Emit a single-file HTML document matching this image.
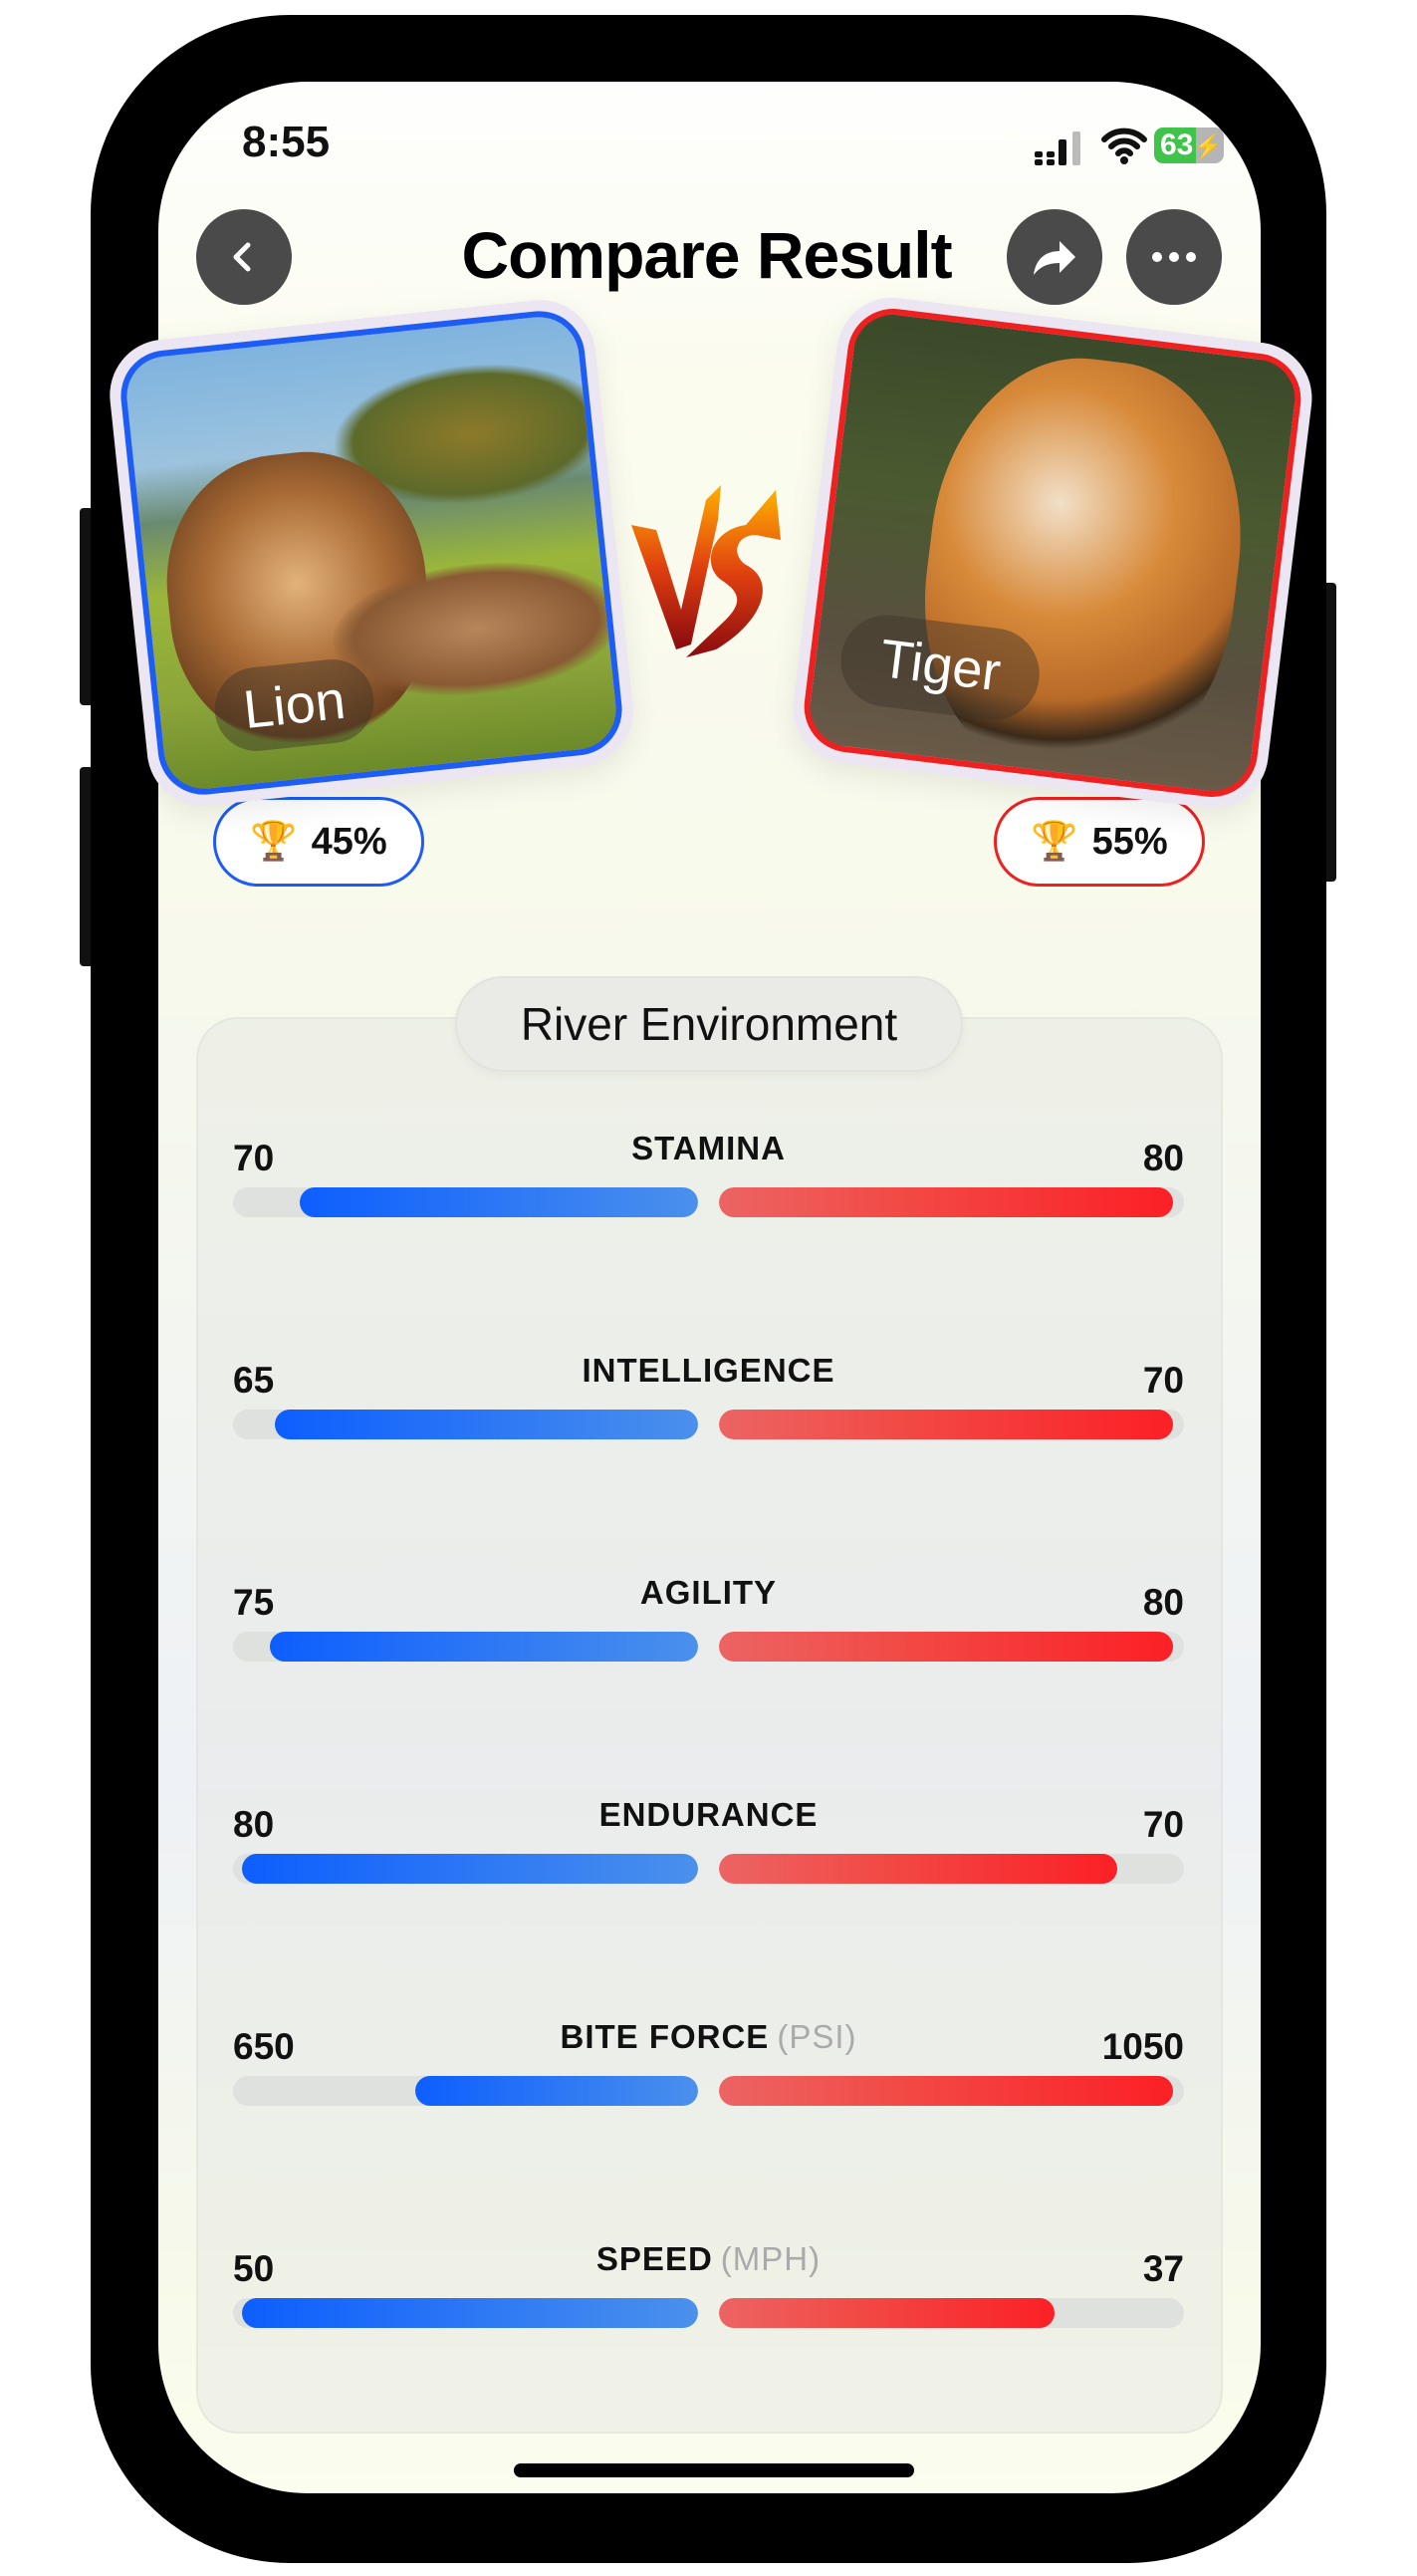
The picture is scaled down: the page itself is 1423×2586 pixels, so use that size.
<!DOCTYPE html>
<html><head><meta charset="utf-8"><style>
*{margin:0;padding:0;box-sizing:border-box}
body{width:1423px;height:2586px;background:#fff;position:relative;overflow:hidden;font-family:"Liberation Sans",sans-serif;color:#111}
.abs{position:absolute}
.phone{left:91px;top:15px;width:1241px;height:2558px;background:#000;border-radius:200px}
.btn{background:#111;border-radius:4px}
.screen{left:159px;top:82px;width:1107px;height:2421px;border-radius:150px;overflow:hidden;background:linear-gradient(180deg,#fefefe 0,#fbfcee 300px,#f7f9ec 900px,#eef1f6 1700px,#f7f9ea 2200px,#fbfdee 100%)}
.circ{width:96px;height:96px;border-radius:50%;background:#4a4a4a;display:flex;align-items:center;justify-content:center}
.card{border-radius:56px;background:#ece6f2;padding:11px;box-shadow:0 10px 30px rgba(0,0,0,.08)}
.card .in{width:100%;height:100%;border-radius:46px;overflow:hidden;position:relative}
.pill{height:90px;border-radius:45px;background:#fff;display:flex;align-items:center;justify-content:center;font-size:38px;font-weight:bold;gap:14px}
.panel{left:38px;top:939px;width:1031px;height:1422px;border-radius:42px;background:rgba(228,231,226,.45);border:2px solid rgba(220,222,215,.5)}
.row{position:absolute;left:75px;width:955px;height:120px}
.num{position:absolute;top:0;font-size:37px;font-weight:bold}
.lab{position:absolute;left:0;right:0;text-align:center;top:-8px;font-size:33px;letter-spacing:1px;font-weight:bold}
.lab span{color:#aaa;font-weight:normal;margin-left:8px}
.track{position:absolute;top:50px;height:30px;width:467px;border-radius:15px;background:#dfe1df;overflow:hidden}
.bl{position:absolute;top:0;bottom:0;right:0;border-radius:15px;background:linear-gradient(90deg,#0d5efe,#4b90ec)}
.rd{position:absolute;top:0;bottom:0;left:0;border-radius:15px;background:linear-gradient(90deg,#ec6464,#f24a45 40%,#fb2026)}
</style></head><body>
<div class="abs btn" style="left:80px;top:510px;width:14px;height:198px"></div>
<div class="abs btn" style="left:80px;top:770px;width:14px;height:200px"></div>
<div class="abs btn" style="left:1328px;top:585px;width:14px;height:300px"></div>
<div class="abs phone"></div>
<div class="abs screen">
  <div class="abs" style="left:84px;top:36px;font-size:44px;font-weight:bold">8:55</div>
  <svg class="abs" style="left:880px;top:48px" width="58" height="36" viewBox="0 0 58 36"><g fill="#111"><rect x="0" y="22" width="8" height="6" rx="2"/><rect x="0" y="30" width="8" height="6" rx="2"/><rect x="12" y="22" width="8" height="6" rx="2"/><rect x="12" y="30" width="8" height="6" rx="2"/><rect x="24" y="10" width="8" height="26" rx="2"/></g><rect x="38" y="2" width="8" height="34" rx="2" fill="#bbb"/></svg>
  <svg class="abs" style="left:947px;top:44px" width="46" height="40" viewBox="0 0 46 40"><path d="M3 14a28 28 0 0 1 40 0M10 21a18 18 0 0 1 26 0M17 28a8 8 0 0 1 12 0" stroke="#111" stroke-width="6" fill="none" stroke-linecap="round"/><circle cx="23" cy="35" r="4" fill="#111"/></svg>
  <div class="abs" style="left:1000px;top:46px;width:70px;height:36px;border-radius:9px;background:linear-gradient(90deg,#3fc34b 60%,#b5b5b5 60%);color:#fff;font-size:30px;font-weight:700;line-height:36px;padding-left:6px">63<span style="color:#fff;font-size:24px">⚡</span></div>
  <div class="abs circ" style="left:38px;top:128px"><svg width="40" height="40" viewBox="0 0 40 40"><path d="M24 8 L12 20 L24 32" stroke="#fff" stroke-width="5" fill="none" stroke-linecap="round" stroke-linejoin="round"/></svg></div>
  <div class="abs" style="left:-6px;right:0;top:136px;text-align:center;font-size:66px;font-weight:700;letter-spacing:-1px;color:#000">Compare Result</div>
  <div class="abs circ" style="left:852px;top:128px"><svg width="50" height="44" viewBox="0 0 50 44"><path d="M4 40 C6 24 16 16 30 16 V6 L46 22 L30 38 V28 C18 28 10 32 4 40Z" fill="#fff"/></svg></div>
  <div class="abs circ" style="left:972px;top:128px"><svg width="50" height="12"><circle cx="8" cy="6" r="5" fill="#fff"/><circle cx="25" cy="6" r="5" fill="#fff"/><circle cx="42" cy="6" r="5" fill="#fff"/></svg></div>

  <svg class="abs" style="left:470px;top:400px" width="160" height="180" viewBox="0 0 160 180"><defs><linearGradient id="f" x1="0" y1="0" x2="0" y2="1"><stop offset="0" stop-color="#ffb000"/><stop offset=".5" stop-color="#e04010"/><stop offset="1" stop-color="#8a0a10"/></linearGradient></defs><path d="M5 45 L30 50 L55 130 L80 20 L95 5 L92 40 L65 165 L50 170Z" fill="url(#f)"/><path d="M150 10 L155 60 L130 55 C110 55 105 75 120 85 C150 100 140 140 90 170 L60 178 L100 140 C120 120 110 110 95 100 C75 85 85 50 120 45 Z" fill="url(#f)"/></svg>
  <div class="abs pill" style="left:55px;top:718px;width:212px;border:3px solid #1d5cf5">🏆<span>45%</span></div>
  <div class="abs pill" style="left:839px;top:718px;width:212px;border:3px solid #ee2020">🏆<span>55%</span></div>

  <div class="abs panel"></div>
  <div class="abs" style="left:298px;top:898px;width:510px;height:96px;border-radius:48px;background:#eaebe6;border:2px solid #e2e3dd;box-shadow:0 4px 10px rgba(0,0,0,.04);font-size:46px;text-align:center;line-height:92px">River Environment</div>

  <div class="row" style="top:1060px"><div class="num" style="left:0">70</div><div class="num" style="right:0">80</div><div class="lab">STAMINA</div><div class="track" style="left:0"><div class="bl" style="width:400px"></div></div><div class="track" style="right:0"><div class="rd" style="width:456px"></div></div></div>
  <div class="row" style="top:1283px"><div class="num" style="left:0">65</div><div class="num" style="right:0">70</div><div class="lab">INTELLIGENCE</div><div class="track" style="left:0"><div class="bl" style="width:425px"></div></div><div class="track" style="right:0"><div class="rd" style="width:456px"></div></div></div>
  <div class="row" style="top:1506px"><div class="num" style="left:0">75</div><div class="num" style="right:0">80</div><div class="lab">AGILITY</div><div class="track" style="left:0"><div class="bl" style="width:430px"></div></div><div class="track" style="right:0"><div class="rd" style="width:456px"></div></div></div>
  <div class="row" style="top:1729px"><div class="num" style="left:0">80</div><div class="num" style="right:0">70</div><div class="lab">ENDURANCE</div><div class="track" style="left:0"><div class="bl" style="width:458px"></div></div><div class="track" style="right:0"><div class="rd" style="width:400px"></div></div></div>
  <div class="row" style="top:1952px"><div class="num" style="left:0">650</div><div class="num" style="right:0">1050</div><div class="lab">BITE FORCE<span>(PSI)</span></div><div class="track" style="left:0"><div class="bl" style="width:284px"></div></div><div class="track" style="right:0"><div class="rd" style="width:456px"></div></div></div>
  <div class="row" style="top:2175px"><div class="num" style="left:0">50</div><div class="num" style="right:0">37</div><div class="lab">SPEED<span>(MPH)</span></div><div class="track" style="left:0"><div class="bl" style="width:458px"></div></div><div class="track" style="right:0"><div class="rd" style="width:337px"></div></div></div>

  <div class="abs" style="left:357px;top:2391px;width:402px;height:14px;border-radius:7px;background:#000"></div>
</div>

<div class="abs card" style="left:128px;top:320px;width:490px;height:470px;transform:rotate(-6deg)">
  <div class="in" style="border:6px solid #1d5cf5;background:linear-gradient(180deg,#7fb3de 0,#9cc3de 25%,#6a8a70 38%,#9ab63a 55%,#8ba53a 80%,#6d8a2a 100%)">
    <div class="abs" style="left:200px;top:40px;width:280px;height:140px;border-radius:50%;background:radial-gradient(#8d7a2a,#5d6a2a 60%,transparent 70%)"></div>
    <div class="abs" style="left:20px;top:110px;width:260px;height:290px;border-radius:45%;background:radial-gradient(circle at 50% 45%,#e3b27b,#a86a35 45%,#6e4220 75%,transparent 78%)"></div>
    <div class="abs" style="left:180px;top:240px;width:290px;height:130px;border-radius:50%;background:radial-gradient(#b8865a,#8a5a35 60%,transparent 72%)"></div>
    <div class="abs" style="left:55px;top:320px;width:160px;height:84px;border-radius:42px;background:rgba(60,50,40,.45);color:#fff;font-size:54px;line-height:84px;text-align:center">Lion</div>
  </div>
</div>
<div class="abs card" style="left:817px;top:320px;width:480px;height:470px;transform:rotate(7deg)">
  <div class="in" style="border:6px solid #ee2020;background:linear-gradient(180deg,#3a4a2a 0,#4a5a30 40%,#5a5040 75%,#6a5a48 100%)">
    <div class="abs" style="left:100px;top:20px;width:310px;height:420px;border-radius:45%;background:radial-gradient(circle at 40% 35%,#f2e0c8,#d88a3a 35%,#b86a28 60%,#3a2a1a 72%,transparent 75%)"></div>
    <div class="abs" style="left:25px;top:300px;width:200px;height:92px;border-radius:46px;background:rgba(60,50,40,.45);color:#fff;font-size:54px;line-height:88px;text-align:center">Tiger</div>
  </div>
</div>
</body></html>
